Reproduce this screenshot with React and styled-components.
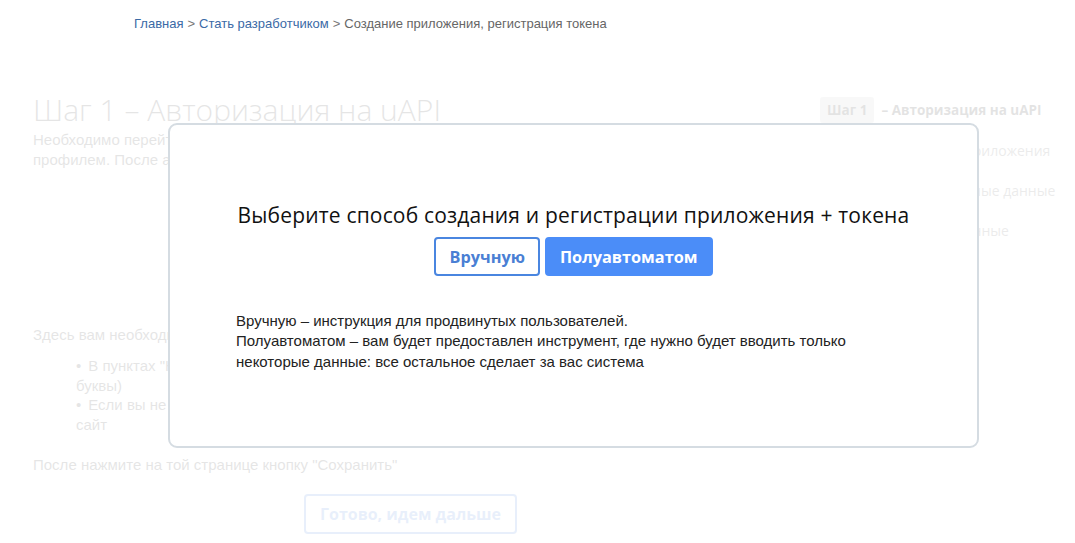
import styled, { createGlobalStyle } from 'styled-components';

const GlobalStyle = createGlobalStyle`
  html, body {
    margin: 0;
    padding: 0;
    background: #ffffff;
  }
  body {
    font-family: 'Liberation Sans', Arial, sans-serif;
    color: #333;
  }
`;

const App = () => {
  return (
    <>
      <GlobalStyle />
      <Page>
        <Breadcrumbs>
          <Crumb href="#">Главная</Crumb>
          <Sep>&gt;</Sep>
          <Crumb href="#">Стать разработчиком</Crumb>
          <Sep>&gt;</Sep>
          <Current>Создание приложения, регистрация токена</Current>
        </Breadcrumbs>

        <Faded>
          <Main>
            <StepTitle>Шаг 1 – Авторизация на uAPI</StepTitle>
            <Paragraph>
              Необходимо перейти на страницу авторизации uAPI и войти под своим
              <br />
              профилем. После авторизации вернитесь на эту страницу
            </Paragraph>
            <Spacer />
            <Paragraph>Здесь вам необходимо заполнить поля формы регистрации</Paragraph>
            <List>
              <li>
                В пунктах "Название" и "Описание" укажите данные приложения (латинские
                <br />
                буквы)
              </li>
              <li>
                Если вы не знаете, что указать в поле "Сайт", укажите ваш основной
                <br />
                сайт
              </li>
            </List>
            <Paragraph>После нажмите на той странице кнопку "Сохранить"</Paragraph>
            <GhostButton>Готово, идем дальше</GhostButton>
          </Main>

          <Sidebar>
            <StepItem $active>
              <StepBadge>Шаг 1</StepBadge>
              <StepName>– Авторизация на uAPI</StepName>
            </StepItem>
            <StepItem>Шаг 2 – Регистрация приложения</StepItem>
            <StepItem>Шаг 3 – Получаем нужные данные</StepItem>
            <StepItem>Шаг 4 – Вводим все данные</StepItem>
          </Sidebar>
        </Faded>

        <Modal>
          <ModalTitle>Выберите способ создания и регистрации приложения + токена</ModalTitle>
          <ButtonRow>
            <ChoiceButton>Вручную</ChoiceButton>
            <ChoiceButton $primary>Полуавтоматом</ChoiceButton>
          </ButtonRow>
          <Description>
            Вручную – инструкция для продвинутых пользователей.
            <br />
            Полуавтоматом – вам будет предоставлен инструмент, где нужно будет вводить только
            <br />
            некоторые данные: все остальное сделает за вас система
          </Description>
        </Modal>
      </Page>
    </>
  );
};

export default App;

// ----------------------
// Styled Components
// ----------------------

const Page = styled.div`
  position: relative;
  width: 1075px;
  height: 543px;
  overflow: hidden;
`;

const Breadcrumbs = styled.nav`
  display: flex;
  align-items: baseline;
  gap: 4px;
  padding: 15px 0 0 134px;
  font-size: 13px;
  line-height: 18px;
`;

const Crumb = styled.a`
  color: #3b6aa6;
  text-decoration: none;
`;

const Sep = styled.span`
  color: #777;
`;

const Current = styled.span`
  color: #666;
`;

const Faded = styled.div`
  display: flex;
  opacity: 0.12;
  padding-top: 57px;
`;

const Main = styled.div`
  flex: 1;
  padding-left: 33px;
`;

const StepTitle = styled.h1`
  margin: 0;
  font-family: 'Open Sans', sans-serif;
  font-weight: 300;
  font-size: 30px;
  line-height: 40px;
  color: #333;
`;

const Paragraph = styled.p`
  margin: 0;
  font-size: 15px;
  line-height: 20px;
  color: #333;
`;

const Spacer = styled.div`
  height: 155px;
`;

const List = styled.ul`
  margin: 11px 0 20px;
  padding-left: 43px;
  list-style: none;
  font-size: 15px;
  line-height: 19.7px;

  li::before {
    content: '•';
    margin-right: 7px;
  }
`;

const GhostButton = styled.button`
  margin: 19px 0 0 271px;
  height: 40px;
  padding: 0 14px;
  border: 2px solid #4a86e0;
  border-radius: 4px;
  background: #fff;
  color: #4a86e0;
  font-family: 'Open Sans', sans-serif;
  font-weight: 700;
  font-size: 16px;
`;

const Sidebar = styled.aside`
  width: 255px;
  display: flex;
  flex-direction: column;
  padding-top: 7px;
`;

const StepItem = styled.div`
  display: flex;
  align-items: center;
  gap: 7px;
  height: ${(p) => (p.$active ? '26px' : '20px')};
  margin-bottom: ${(p) => (p.$active ? '17px' : '20px')};
  font-family: 'Open Sans', sans-serif;
  font-size: ${(p) => (p.$active ? '13.5px' : '14px')};
  color: ${(p) => (p.$active ? '#222' : '#666')};
`;

const StepBadge = styled.span`
  padding: 4px 7px;
  background: #ccc;
  border-radius: 3px;
  font-weight: 700;
`;

const StepName = styled.span`
  font-weight: 700;
`;

const Modal = styled.div`
  position: absolute;
  left: 168px;
  top: 123px;
  width: 807px;
  height: 321px;
  box-sizing: content-box;
  border: 2px solid #d5dce2;
  border-radius: 9px;
  background: #fff;
  display: flex;
  flex-direction: column;
  align-items: center;
`;

const ModalTitle = styled.h2`
  margin: 76px 0 0;
  font-family: 'Open Sans', sans-serif;
  font-weight: 400;
  font-size: 21px;
  letter-spacing: 0.17px;
  line-height: 28px;
  color: #111;
`;

const ButtonRow = styled.div`
  display: flex;
  gap: 5px;
  margin-top: 8px;
`;

const ChoiceButton = styled.button`
  height: 39px;
  padding: 0 13px;
  border: 2px solid ${(p) => (p.$primary ? '#4b8df8' : '#4a86e0')};
  border-radius: 4px;
  background: ${(p) => (p.$primary ? '#4b8df8' : '#fff')};
  color: ${(p) => (p.$primary ? '#fff' : '#4a7fd4')};
  font-family: 'Open Sans', sans-serif;
  font-weight: 700;
  font-size: 16.3px;
  cursor: pointer;
`;

const Description = styled.p`
  align-self: stretch;
  margin: 35px 0 0;
  padding-left: 66px;
  font-size: 15px;
  line-height: 20.4px;
  color: #222;
`;
